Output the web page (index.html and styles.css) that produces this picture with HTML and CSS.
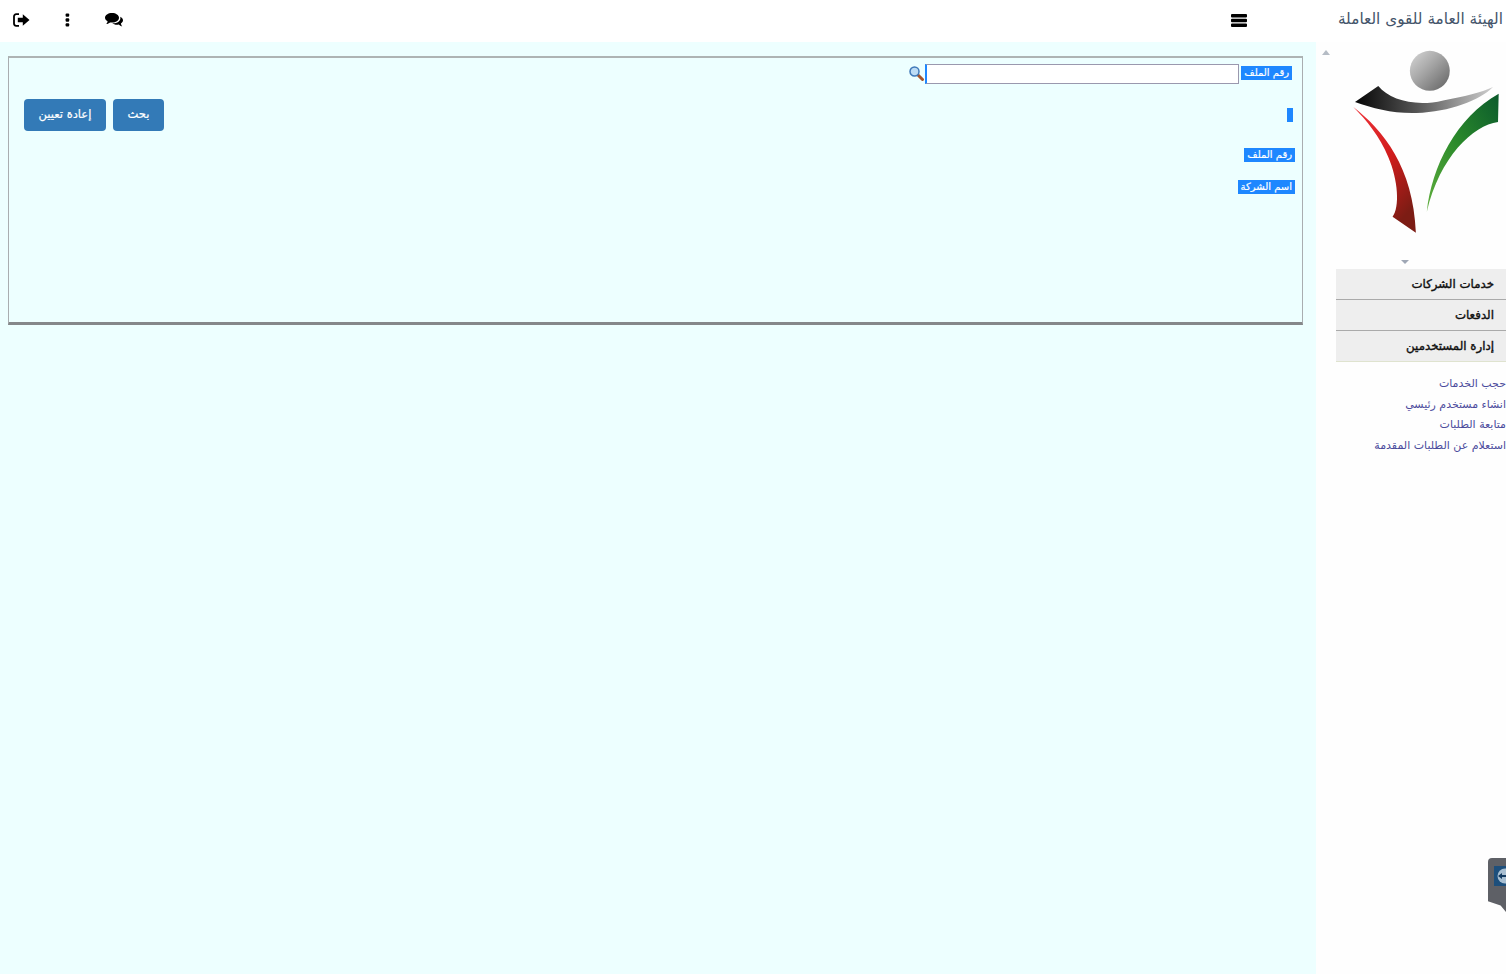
FILE: index.html
```html
<!DOCTYPE html>
<html lang="ar" dir="rtl">
<head>
  <meta charset="UTF-8" />
  <meta name="viewport" content="width=device-width, initial-scale=1" />
  <title>الهيئة العامة للقوى العاملة</title>
  <link rel="stylesheet" href="styles.css">
</head>
<body>
  <header class="topbar">
    <div class="brand">الهيئة العامة للقوى العاملة</div>
    <button class="icon-btn menu-toggle" type="button" aria-label="menu">
      <svg width="16" height="13" viewBox="0 0 16 13"><path d="M1 0h14a1 1 0 0 1 1 1v1.4a1 1 0 0 1-1 1H1a1 1 0 0 1-1-1V1a1 1 0 0 1 1-1zm0 4.8h14a1 1 0 0 1 1 1v1.4a1 1 0 0 1-1 1H1a1 1 0 0 1-1-1V5.800a1 1 0 0 1 1-1zm0 4.800h14a1 1 0 0 1 1 1V12a1 1 0 0 1-1 1H1a1 1 0 0 1-1-1v-1.400a1 1 0 0 1 1-1z"/></svg>
    </button>
    <div class="top-actions">
      <button class="icon-btn" type="button" aria-label="comments">
        <svg width="18" height="14" viewBox="0 0 18 14"><path d="M7 0c3.900 0 7 2.100 7 4.800s-3.100 4.800-7 4.800c-.7 0-1.300-.1-1.900-.2C4 10.300 2.700 10.900 1.300 11c.7-.8 1.200-1.600 1.300-2.700C1 7.400 0 6.200 0 4.800 0 2.100 3.100 0 7 0z"/><path d="M15.300 3.700C16.900 4.500 18 5.800 18 7.300c0 1.300-.8 2.400-2.100 3.200.1 1.100.6 2 1.300 2.900-1.300-.2-2.500-.8-3.500-1.800-.5.100-1.100.2-1.700.2-1.900 0-3.600-.6-4.800-1.500 4.700.2 9-2 8.100-6.600z"/></svg>
      </button>
      <button class="icon-btn" type="button" aria-label="more">
        <svg width="5" height="14" viewBox="0 0 5 14"><rect x=".6" y=".4" width="3.600" height="3.400" rx="1"/><rect x=".6" y="5.300" width="3.600" height="3.400" rx="1"/><rect x=".6" y="10.200" width="3.600" height="3.400" rx="1"/></svg>
      </button>
      <button class="icon-btn" type="button" aria-label="logout">
        <svg width="17" height="14" viewBox="0 0 17 14"><path d="M6 1.200H3.200A2.200 2.200 0 0 0 1 3.400v7.200a2.200 2.200 0 0 0 2.200 2.200H6" fill="none" stroke="#000" stroke-width="1.800"/><path d="M4.800 4.700h5V1.300L16.500 7l-6.700 5.700V9.300h-5z"/></svg>
      </button>
    </div>
  </header>

  <div class="layout">
    <aside class="sidebar">
      <span class="arrow-up"></span>
      <svg class="logo" width="153" height="190" viewBox="100 140 460 570">
        <defs>
          <linearGradient id="gradBlack" x1="0" x2="1" y1="0" y2="0">
            <stop offset="0" stop-color="#050505"/>
            <stop offset=".45" stop-color="#555"/>
            <stop offset="1" stop-color="#cfcfcf"/>
          </linearGradient>
          <linearGradient id="gradGreen" x1="1" x2="0" y1="0" y2="1">
            <stop offset="0" stop-color="#0b5a2c"/>
            <stop offset=".5" stop-color="#2b8a2b"/>
            <stop offset="1" stop-color="#5fae3d"/>
          </linearGradient>
          <linearGradient id="gradRed" x1="0" x2=".6" y1="0" y2="1">
            <stop offset="0" stop-color="#f0333a"/>
            <stop offset=".55" stop-color="#d01c1c"/>
            <stop offset="1" stop-color="#7c1c14"/>
          </linearGradient>
          <linearGradient id="gradBall" x1="1" x2="0" y1="1" y2="0">
            <stop offset="0" stop-color="#5f5f5f"/>
            <stop offset=".55" stop-color="#a5a5a5"/>
            <stop offset="1" stop-color="#d8d8d8"/>
          </linearGradient>
        </defs>
        <circle cx="340" cy="211" r="60" fill="url(#gradBall)"/>
        <path d="M115 305L185 257C220 300 300 320 380 300C440 290 500 275 530 260C490 300 400 335 300 338C230 340 170 325 115 305Z" fill="url(#gradBlack)"/>
        <path d="M547 280L545 365C470 375 370 470 331 635C345 500 420 350 547 280Z" fill="url(#gradGreen)"/>
        <path d="M110 320C200 390 290 500 298 698L228 650C250 620 245 540 215 470C190 410 150 360 110 320Z" fill="url(#gradRed)"/>
      </svg>
      <span class="arrow-down"></span>
      <nav class="side-menu">
        <div class="menu-head">خدمات الشركات</div>
        <div class="menu-head">الدفعات</div>
        <div class="menu-head">إدارة المستخدمين</div>
        <ul class="menu-links">
          <li><a href="#">حجب الخدمات</a></li>
          <li><a href="#">انشاء مستخدم رئيسي</a></li>
          <li><a href="#">متابعة الطلبات</a></li>
          <li><a href="#">استعلام عن الطلبات المقدمة</a></li>
        </ul>
      </nav>
    </aside>

    <main class="content">
      <form class="panel">
        <div class="row-file">
          <label class="tag tag-file" for="fileNo">رقم الملف</label>
          <input class="file-input" type="text" id="fileNo" />
          <svg class="lens" width="15" height="15" viewBox="0 0 15 15">
            <path d="M8.500 8.500L13.500 13.500" stroke="#a4552c" stroke-width="3" stroke-linecap="round"/>
            <circle cx="5.500" cy="5.500" r="4.500" fill="#bcdcf5" stroke="#3f78b8" stroke-width="1.500"/>
          </svg>
        </div>
        <div class="row-actions">
          <span class="tag-empty"></span>
          <div class="buttons">
            <button class="btn btn-search" type="button">بحث</button>
            <button class="btn btn-reset" type="reset">إعادة تعيين</button>
          </div>
        </div>
        <div class="row-result"><span class="tag">رقم الملف</span></div>
        <div class="row-result"><span class="tag">اسم الشركة</span></div>
      </form>
    </main>
  </div>

  <!-- remote support widget -->
  <div class="support-tab">
    <svg width="12" height="20" viewBox="0 0 12 20"><rect width="12" height="20" fill="#1d4f7c"/><circle cx="11" cy="10" r="7.500" fill="#a8bfd2"/><path d="M4 10l4-3v2h4v2H8v2z" fill="#123a60"/></svg>
  </div>
</body>
</html>
```

FILE: styles.css
```css
html, body {
  height: 100%;
}
body {
  margin: 0;
  display: flex;
  flex-direction: column;
  overflow: hidden;
  background: #fff;
  font-family: "DejaVu Sans", "Noto Sans", sans-serif;
  color: #222;
}
.topbar {
  display: flex;
  align-items: center;
  height: 42px;
  padding-bottom: 2px;
  box-sizing: border-box;
  flex: none;
  background: #fff;
}
.brand {
  width: 165px;
  padding-right: 3px;
  margin: 0 0 2px 91px;
  font-size: 15.300px;
  line-height: 34px;
  white-space: nowrap;
  color: #44546a;
}
.icon-btn {
  display: flex;
  align-items: center;
  justify-content: center;
  padding: 0;
  border: none;
  background: none;
  cursor: pointer;
}
.icon-btn svg {
  display: block;
}
.menu-toggle {
  width: 16px;
  height: 13px;
}
.top-actions {
  display: flex;
  align-items: center;
  gap: 35px;
  margin-right: auto;
  padding-left: 13px;
}
.layout {
  display: flex;
  flex: 1;
  min-height: 0;
}
.sidebar {
  position: relative;
  width: 190px;
  flex: none;
  background: #fefefe;
}
.logo {
  display: block;
  margin: 5px 3px 0 0;
}
.arrow-up, .arrow-down {
  position: absolute;
  width: 0;
  height: 0;
  border-left: 4px solid transparent;
  border-right: 4px solid transparent;
}
.arrow-up {
  top: 8px;
  left: 6px;
  border-bottom: 5px solid #b5bcc5;
}
.arrow-down {
  top: 218px;
  left: 85px;
  border-top: 4px solid #9fa7b5;
}
.side-menu {
  margin: 32px 0 0 20px;
  overflow: hidden;
}
.menu-head {
  height: 30px;
  line-height: 31px;
  padding-right: 12px;
  font-size: 11.800px;
  -webkit-text-stroke: .4px #111;
  color: #111;
  background: #eeeeee;
  border-bottom: 1px solid #aaa;
}
.menu-head:nth-child(3) {
  border-bottom-color: #dfe3cf;
}
.menu-links {
  list-style: none;
  margin: 11px 0 0;
  padding: 0;
}
.menu-links li {
  height: 20.700px;
  line-height: 21px;
  font-size: 11px;
  white-space: nowrap;
}
.menu-links a {
  color: #4b4b9c;
  text-decoration: none;
}
.content {
  flex: 1;
  padding: 14px 13px 0 8px;
  background: #edffff;
}
.panel {
  height: 264px;
  border: 1px solid #a9adb0;
  border-top: 2px solid #aeb4b4;
  border-bottom: 3px solid #85888a;
}
.tag {
  display: inline-block;
  height: 14px;
  padding: 0 3px;
  line-height: 14px;
  font-size: 10px;
  -webkit-text-stroke: .2px #fff;
  white-space: nowrap;
  color: #fff;
  background: #1e87ff;
}
.tag-file {
  margin-top: -2px;
}
.row-file {
  display: flex;
  align-items: center;
  height: 20px;
  margin-top: 6px;
  padding-right: 10px;
}
.file-input {
  width: 314px;
  height: 20px;
  margin: 0 2px 0 1px;
  padding: 0;
  box-sizing: border-box;
  background: #fff;
  border: 1px solid #9a98ae;
  border-left: 2px solid #1e87ff;
}
.lens {
  flex: none;
  margin-top: -2px;
}
.row-actions {
  display: flex;
  align-items: center;
  justify-content: space-between;
  height: 32px;
  margin-top: 15px;
  padding: 0 9px 0 15px;
}
.tag-empty {
  width: 6px;
  height: 14px;
  background: #1e87ff;
}
.buttons {
  display: flex;
  gap: 7px;
}
.btn {
  height: 32px;
  padding: 0 0 3px;
  border: none;
  border-radius: 4px;
  font-family: inherit;
  font-size: 11.500px;
  -webkit-text-stroke: .2px #fff;
  color: #fff;
  background: #337ab7;
  cursor: pointer;
}
.btn-search {
  width: 51px;
}
.btn-reset {
  width: 82px;
}
.row-result {
  display: flex;
  height: 14px;
  padding-right: 7px;
  margin-top: 17px;
}
.row-result + .row-result {
  margin-top: 18px;
}
.support-tab {
  position: absolute;
  top: 858px;
  right: 0;
  width: 18px;
  height: 54px;
  box-sizing: border-box;
  padding: 8px 0 0 6px;
  background: #5e6066;
  border-radius: 4px 0 0 0;
  clip-path: polygon(0 0, 100% 0, 100% 100%, 70% 88%, 0 80%);
}
.support-tab svg {
  display: block;
}
```
